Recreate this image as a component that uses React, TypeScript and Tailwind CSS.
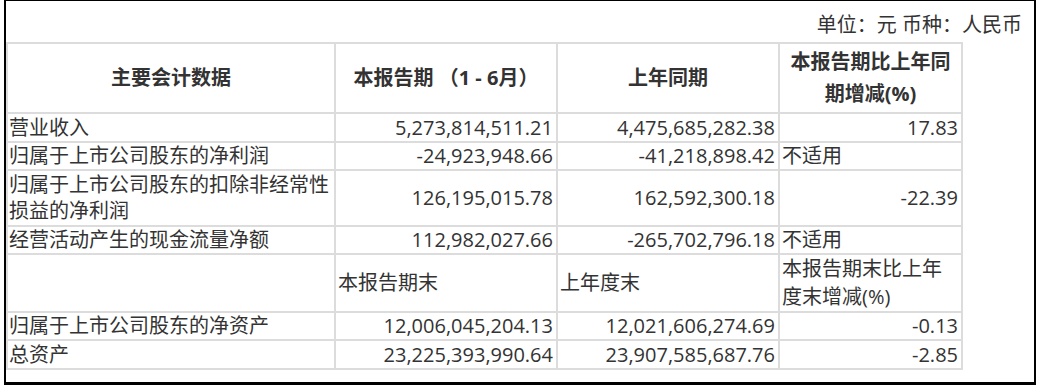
const rows: { label: React.ReactNode; a: string; b: string; c: string; h: string }[] = [
  { label: "营业收入", a: "5,273,814,511.21", b: "4,475,685,282.38", c: "17.83", h: "h-[29px]" },
  { label: "归属于上市公司股东的净利润", a: "-24,923,948.66", b: "-41,218,898.42", c: "不适用", h: "h-[28px]" },
  {
    label: (
      <>
        归属于上市公司股东的扣除非经常性
        <br />
        损益的净利润
      </>
    ),
    a: "126,195,015.78",
    b: "162,592,300.18",
    c: "-22.39",
    h: "h-[56px]",
  },
  { label: "经营活动产生的现金流量净额", a: "112,982,027.66", b: "-265,702,796.18", c: "不适用", h: "h-[28px]" },
];

const rows2 = [
  { label: "归属于上市公司股东的净资产", a: "12,006,045,204.13", b: "12,021,606,274.69", c: "-0.13", h: "h-[27px]" },
  { label: "总资产", a: "23,225,393,990.64", b: "23,907,585,687.76", c: "-2.85", h: "h-[29px]" },
];

const cell = "border-2 border-[#dcdcdc] p-0 align-middle";

function Pct({ v }: { v: string }) {
  if (v === "不适用") return <td className={`${cell} pl-[2px] text-left`}>{v}</td>;
  return <td className={`${cell} pr-[3px] text-right`}>{v}</td>;
}

export default function App() {
  return (
    <div className="bg-white w-[1037px] h-[387px]">
      <div
        className="ml-[4px] w-[1032px] h-[385px] border-t border-l-2 border-r-2 border-b-[3px] border-black text-[20px] text-[#333]"
        style={{ fontFamily: '"Open Sans", "Noto Sans CJK SC", sans-serif' }}
      >
        <div className="h-[41px] pt-[10px] pr-[12px] text-right leading-[28px]">单位：元 币种：人民币</div>
        <table className="table-fixed border-collapse w-[957px] leading-[26px]">
          <colgroup>
            <col className="w-[328px]" />
            <col className="w-[222px]" />
            <col className="w-[222px]" />
            <col className="w-[183px]" />
          </colgroup>
          <thead>
            <tr className="h-[70px] font-bold leading-[32px]">
              <th className={`${cell} text-center`}>主要会计数据</th>
              <th className={`${cell} text-center`}>本报告期 （1 - 6月）</th>
              <th className={`${cell} text-center`}>上年同期</th>
              <th className={`${cell} text-center`}>
                本报告期比上年同
                <br />
                期增减(%)
              </th>
            </tr>
          </thead>
          <tbody>
            {rows.map((r, i) => (
              <tr key={i} className={r.h}>
                <td className={`${cell} pl-[1px] text-left`}>{r.label}</td>
                <td className={`${cell} pr-[3px] text-right`}>{r.a}</td>
                <td className={`${cell} pr-[3px] text-right`}>{r.b}</td>
                <Pct v={r.c} />
              </tr>
            ))}
            <tr className="h-[58px] leading-[28px]">
              <td className={cell}></td>
              <td className={`${cell} pl-[2px]`}>本报告期末</td>
              <td className={`${cell} pl-[2px]`}>上年度末</td>
              <td className={`${cell} pl-[2px]`}>
                本报告期末比上年
                <br />
                度末增减(%)
              </td>
            </tr>
            {rows2.map((r, i) => (
              <tr key={i} className={r.h}>
                <td className={`${cell} pl-[1px] text-left`}>{r.label}</td>
                <td className={`${cell} pr-[3px] text-right`}>{r.a}</td>
                <td className={`${cell} pr-[3px] text-right`}>{r.b}</td>
                <Pct v={r.c} />
              </tr>
            ))}
          </tbody>
        </table>
      </div>
    </div>
  );
}
